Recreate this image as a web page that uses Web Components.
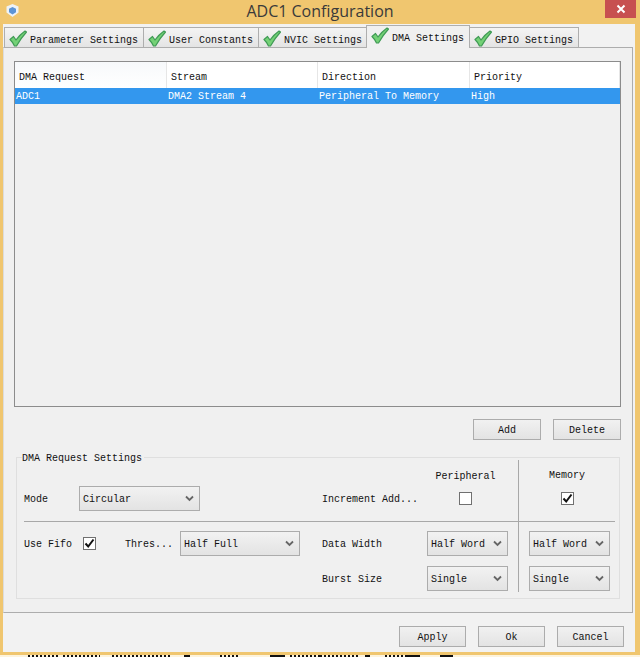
<!DOCTYPE html>
<html>
<head>
<meta charset="utf-8">
<title>ADC1 Configuration</title>
<style>
html, body { margin: 0; padding: 0; background: #f0c66f; }
body { width: 640px; height: 657px; overflow: hidden; }
</style>
</head>
<body>
<adc-window></adc-window>

<script>
const FONT = '"Liberation Mono", "DejaVu Sans Mono", monospace';
const CHECK = `<svg width="18" height="17" viewBox="0 0 18 17"><path d="M1 9.5 L4.5 6.5 L7 10 Q11 4.5 16 1 L17.5 2 Q12 8 7.5 16 L5.5 16 Q3.8 12.2 1 9.5 Z" fill="#74d176" stroke="#3f9a55" stroke-width="1.2" stroke-linejoin="round"/></svg>`;

class TabItem extends HTMLElement {
    constructor() {
        super();
        this.attachShadow({ mode: 'open' }).innerHTML = `
            <style>
                :host {
                    display: flex;
                    align-items: center;
                    box-sizing: border-box;
                    height: 20px;
                    margin-top: 3px;
                    margin-right: -1px;
                    padding: 1px 5px 0 4px;
                    gap: 3px;
                    background: linear-gradient(#f4f4f4, #e4e4e4);
                    border: 1px solid #aeaeae;
                    border-bottom: 0;
                    font: 10px ${FONT};
                    color: #111;
                    white-space: nowrap;
                    position: relative;
                }
                :host([active]) {
                    background: #f0f0f0;
                    height: 23px;
                    margin-top: 1px;
                    margin-left: -1px;
                    margin-bottom: -1px;
                    padding: 0 5px 3px 4px;
                    z-index: 2;
                }
                svg { display: block; }
                span { padding-top: 5px; }
                :host([active]) span { padding-top: 5px; }
            </style>
            ${CHECK}<span><slot></slot></span>
        `;
    }
}

class PushButton extends HTMLElement {
    constructor() {
        super();
        this.attachShadow({ mode: 'open' }).innerHTML = `
            <style>
                :host {
                    display: flex;
                    align-items: center;
                    justify-content: center;
                    box-sizing: border-box;
                    height: 21px;
                    width: 68px;
                    padding-top: 1px;
                    background: linear-gradient(#f1f1f1, #e3e3e3);
                    border: 1px solid #acacac;
                    font: 10px ${FONT};
                    color: #111;
                }
            </style>
            <slot></slot>
        `;
    }
}

class ComboBox extends HTMLElement {
    constructor() {
        super();
        this.attachShadow({ mode: 'open' }).innerHTML = `
            <style>
                :host {
                    display: flex;
                    align-items: center;
                    justify-content: space-between;
                    box-sizing: border-box;
                    height: 25px;
                    padding: 2px 5px 0 3px;
                    background: linear-gradient(#f2f2f2, #e3e3e3);
                    border: 1px solid #acacac;
                    font: 10px ${FONT};
                    color: #111;
                    white-space: nowrap;
                }
                svg { display: block; margin-top: -2px; }
            </style>
            <span><slot></slot></span>
            <svg width="9" height="7" viewBox="0 0 9 7"><path d="M1 1.5 L4.5 5 L8 1.5" fill="none" stroke="#666" stroke-width="1.8"/></svg>
        `;
    }
}

class CheckBox extends HTMLElement {
    constructor() {
        super();
        const mark = this.hasAttribute('checked')
            ? '<svg width="11" height="11" viewBox="0 0 11 11"><path d="M1.5 5.5 L4.2 8.5 L9.5 1.5" fill="none" stroke="#111" stroke-width="2"/></svg>'
            : '';
        this.attachShadow({ mode: 'open' }).innerHTML = `
            <style>
                :host {
                    display: flex;
                    align-items: center;
                    justify-content: center;
                    box-sizing: border-box;
                    width: 13px;
                    height: 13px;
                    background: #fff;
                    border: 1px solid #707070;
                }
            </style>
            ${mark}
        `;
    }
}

class DmaTable extends HTMLElement {
    constructor() {
        super();
        this.attachShadow({ mode: 'open' }).innerHTML = `
            <style>
                :host {
                    display: block;
                    box-sizing: border-box;
                    height: 346px;
                    background: #f0f0f0;
                    border: 1px solid #8c8c8c;
                    font: 10px ${FONT};
                    color: #111;
                }
                .row { display: grid; grid-template-columns: 152px 151px 152px 1fr; }
                .head { height: 26px; background: #fff; align-items: center; }
                .head div { height: 100%; display: flex; align-items: center; padding: 4px 0 0 4px; border-right: 1px solid #e6e6e6; box-sizing: border-box; }
                .head div:first-child { background: linear-gradient(#f7f9fb, #fff); }
                .sel { height: 16px; background: #3397ee; color: #fff; align-items: center; }
                .sel div { padding-left: 1px; }
            </style>
            <div class="row head"><div>DMA Request</div><div>Stream</div><div>Direction</div><div>Priority</div></div>
            <div class="row sel"><div>ADC1</div><div>DMA2 Stream 4</div><div>Peripheral To Memory</div><div>High</div></div>
        `;
    }
}

class RequestGroup extends HTMLElement {
    constructor() {
        super();
        this.attachShadow({ mode: 'open' }).innerHTML = `
            <style>
                :host { display: block; box-sizing: border-box; position: relative; height: 142px; margin: 17px 1px 0 2px; border: 1px solid #dfdfdf; font: 10px ${FONT}; color: #111; }
                .legend { position: absolute; left: 5px; top: -5px; background: #f0f0f0; padding-right: 2px; line-height: 12px; }
                .r1 { display: flex; height: 63px; }
                .r2 { display: flex; }
                .lhs { width: 501px; box-sizing: border-box; padding: 18px 0 0 7px; display: flex; align-items: center; }
                .mode, .inc { padding-top: 2px; }
                .mode { width: 55px; }
                .inc { margin-left: 122px; width: 111px; }
                .pc { position: relative; width: 65px; display: flex; justify-content: center; }
                .cap { position: absolute; top: -21px; left: 0; right: 0; text-align: center; }
                .rhs { position: relative; flex: 1; margin: 2px 4px 0 0; padding: 16px 0 0 1px; box-sizing: border-box; border-left: 1px solid #a8a8a8; display: flex; align-items: center; justify-content: center; }
                .rhs .cap { top: 10px; }
                hr { margin: 0 4px 0 7px; border: 0; height: 1px; background: #a8a8a8; }
                .l2 { width: 501px; box-sizing: border-box; padding: 9px 0 0 7px; }
                .rr { flex: 1; margin-right: 4px; border-left: 1px solid #a8a8a8; padding: 9px 0 0 10px; display: flex; flex-direction: column; gap: 10px; height: 70px; box-sizing: border-box; }
                .rr combo-box { width: 81px; }
                .line { display: flex; align-items: center; height: 25px; }
                .line + .line { margin-top: 10px; }
                .ff, .th, .dw, .bs { padding-top: 2px; }
                .ff { width: 59px; }
                .cb { width: 42px; }
                .th { width: 55px; }
                .dw { margin-left: 22px; width: 105px; }
                .bs { margin-left: 298px; width: 105px; }
            </style>
            <div class="legend">DMA Request Settings</div>
            <div class="r1">
                <div class="lhs">
                    <span class="mode">Mode</span>
                    <combo-box style="width:121px">Circular</combo-box>
                    <span class="inc">Increment Add...</span>
                    <div class="pc"><span class="cap">Peripheral</span><check-box></check-box></div>
                </div>
                <div class="rhs"><span class="cap">Memory</span><check-box checked></check-box></div>
            </div>
            <hr>
            <div class="r2">
                <div class="l2">
                    <div class="line">
                        <span class="ff">Use Fifo</span>
                        <span class="cb"><check-box checked></check-box></span>
                        <span class="th">Thres...</span>
                        <combo-box style="width:120px">Half Full</combo-box>
                        <span class="dw">Data Width</span>
                        <combo-box style="width:81px">Half Word</combo-box>
                    </div>
                    <div class="line">
                        <span class="bs">Burst Size</span>
                        <combo-box style="width:81px">Single</combo-box>
                    </div>
                </div>
                <div class="rr">
                    <combo-box>Half Word</combo-box>
                    <combo-box>Single</combo-box>
                </div>
            </div>
        `;
    }
}

class DmaPage extends HTMLElement {
    constructor() {
        super();
        this.attachShadow({ mode: 'open' }).innerHTML = `
            <style>
                :host {
                    display: block;
                    box-sizing: border-box;
                    height: 566px;
                    margin-right: 2px;
                    padding: 13px 11px 0 10px;
                    background: #f0f0f0;
                    border: 1px solid #adadad;
                    border-left-color: #dcdcdc;
                    font: 10px ${FONT};
                    color: #111;
                }
                .actions { display: flex; justify-content: flex-end; gap: 12px; margin-top: 12px; }
            </style>
            <dma-table></dma-table>
            <div class="actions"><push-button>Add</push-button><push-button>Delete</push-button></div>
            <request-group></request-group>
        `;
    }
}

class AdcWindow extends HTMLElement {
    constructor() {
        super();
        this.attachShadow({ mode: 'open' }).innerHTML = `
            <style>
                :host {
                    display: flex;
                    flex-direction: column;
                    box-sizing: border-box;
                    width: 640px;
                    height: 657px;
                    background: #f0c66f;
                    font: 10px ${FONT};
                    position: relative;
                }
                .title {
                    height: 24px;
                    display: flex;
                    align-items: center;
                    justify-content: center;
                    font: 16px "Open Sans", "Noto Sans", sans-serif;
                    color: #3a3a3a;
                    position: relative;
                    padding-bottom: 2px;
                    box-sizing: border-box;
                }
                .logo { position: absolute; left: 6px; top: 4px; }
                .close {
                    position: absolute;
                    right: 4px;
                    top: 0;
                    width: 31px;
                    height: 18px;
                    background: #c75050;
                    display: flex;
                    align-items: center;
                    justify-content: center;
                }
                .client {
                    margin: 0 5px 0 3px;
                    height: 628px;
                    background: #f2f2f2;
                    display: flex;
                    flex-direction: column;
                    box-sizing: border-box;
                }
                .tabs { display: flex; height: 23px; padding-left: 1px; position: relative; z-index: 1; }
                .footer { display: flex; justify-content: flex-end; gap: 12px; padding: 13px 11px 0 0; }
                .footer push-button { width: 67px; }
                /* what shows behind the window along the bottom edge */
                .behind { position: absolute; left: 0; bottom: 0; display: block; background: #fdf3dc; }
            </style>
            <div class="title">
                <svg class="logo" width="13" height="13" viewBox="0 0 13 13"><path d="M6.5 0 L12.5 2.5 V8.5 L6.5 13 L0.5 8.5 V2.5 Z" fill="#eef2f6"/><path d="M6.5 3 L10 4.8 V8.2 L6.5 10.4 L3 8.2 V4.8 Z" fill="#5c94d6"/></svg>
                ADC1 Configuration
                <div class="close"><svg width="10" height="10" viewBox="0 0 10 10"><path d="M1.5 1.5 L8.5 8.5 M8.5 1.5 L1.5 8.5" stroke="#fff" stroke-width="2"/></svg></div>
            </div>
            <div class="client">
                <div class="tabs">
                    <tab-item>Parameter Settings</tab-item>
                    <tab-item>User Constants</tab-item>
                    <tab-item>NVIC Settings</tab-item>
                    <tab-item active>DMA Settings</tab-item>
                    <tab-item>GPIO Settings</tab-item>
                </div>
                <dma-page></dma-page>
                <div class="footer"><push-button>Apply</push-button><push-button>Ok</push-button><push-button>Cancel</push-button></div>
            </div>
            <svg class="behind" width="640" height="2" viewBox="0 0 640 2" stroke="#111" stroke-width="2">
                <path stroke-dasharray="2 2" d="M28 1H58M63 1H100M112 1H170M220 1H240M290 1H320M320 1H360M385 1H405"/>
                <path d="M184 1H190M270 1H285M365 1H370M405 1H420M440 1H453"/>
            </svg>
        `;
    }
}

customElements.define('tab-item', TabItem);
customElements.define('push-button', PushButton);
customElements.define('combo-box', ComboBox);
customElements.define('check-box', CheckBox);
customElements.define('dma-table', DmaTable);
customElements.define('request-group', RequestGroup);
customElements.define('dma-page', DmaPage);
customElements.define('adc-window', AdcWindow);
</script>
</body>
</html>
